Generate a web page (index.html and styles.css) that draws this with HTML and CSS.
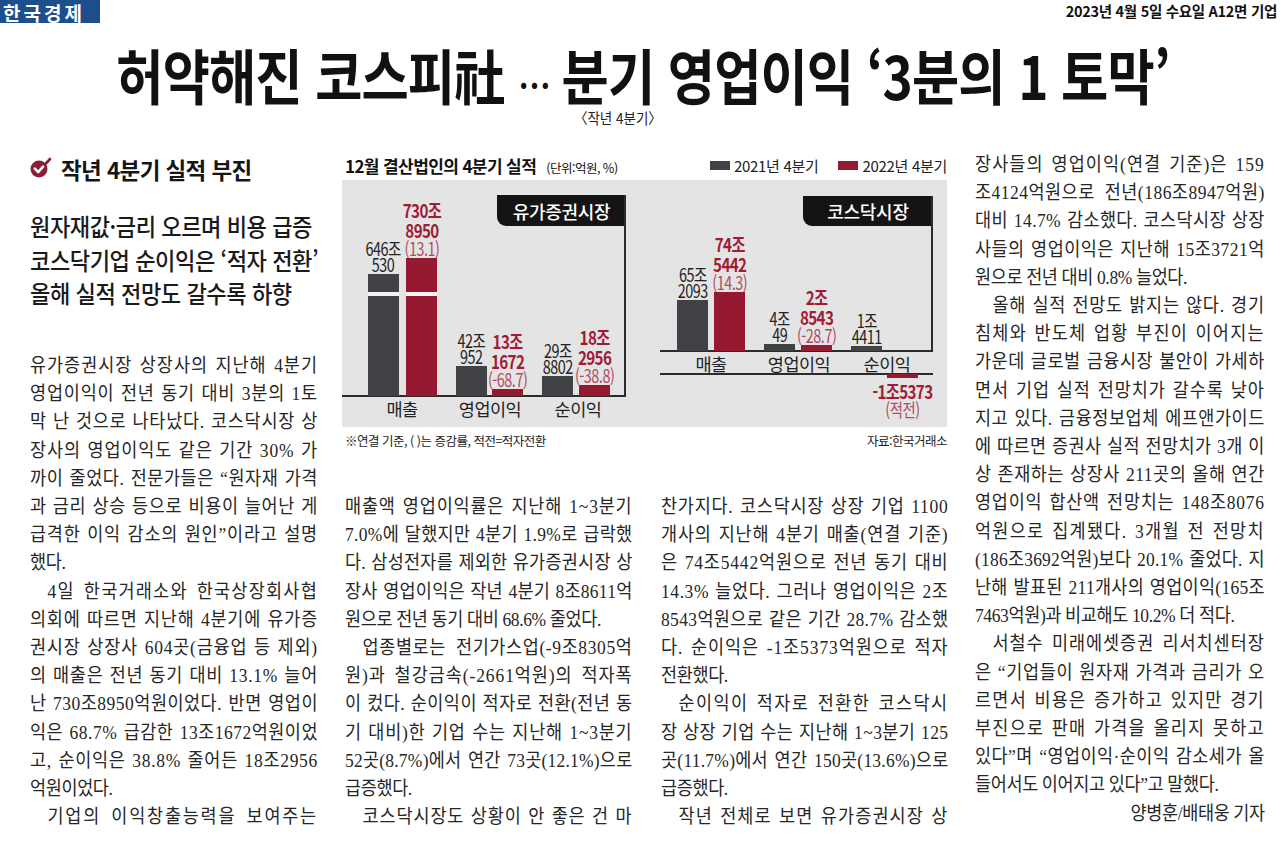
FILE: index.html
```html
<!DOCTYPE html>
<html lang="ko">
<head>
<meta charset="utf-8">
<title>허약해진 코스피社</title>
<link rel="stylesheet" href="styles.css">
</head>
<body>
<div class="topbar">
  <div class="logo">한국경제</div>
  <div class="dateline">2023년 4월 5일 수요일 A12면 기업</div>
</div>
<div class="headline"><h1>허약해진 코스피社 <span class="ell">⋯</span> 분기 영업이익 ‘3분의 1 토막’</h1></div>
<div class="subtitle"><span>〈작년 4분기〉</span></div>

<div class="main">
  <div class="col left">
    <div class="sec-head">
      <svg class="chk" width="24" height="22" viewBox="0 0 24 22"><circle cx="9" cy="12" r="8.5" fill="#8c1d35"/><polyline points="4.8,11.6 8.3,15 13.2,9.4" fill="none" stroke="#fff" stroke-width="2.6" stroke-linecap="round" stroke-linejoin="round"/><line x1="14.6" y1="7.8" x2="20" y2="2" stroke="#8c1d35" stroke-width="2.6" stroke-linecap="round"/></svg>
      <span>작년 4분기 실적 부진</span>
    </div>
    <div class="lead">
      <span>원자재값·금리 오르며 비용 급증</span>
      <span>코스닥기업 순이익은 ‘적자 전환’</span>
      <span>올해 실적 전망도 갈수록 하향</span>
    </div>
    <div class="txt first">
      <p>
        <span>유가증권시장 상장사의 지난해 4분기</span>
        <span>영업이익이 전년 동기 대비 3분의 1토</span>
        <span>막 난 것으로 나타났다. 코스닥시장 상</span>
        <span>장사의 영업이익도 같은 기간 30% 가</span>
        <span>까이 줄었다. 전문가들은 “원자재 가격</span>
        <span>과 금리 상승 등으로 비용이 늘어난 게</span>
        <span>급격한 이익 감소의 원인”이라고 설명</span>
        <span class="e">했다.</span>
      </p>
      <p>
        <span class="i">4일 한국거래소와 한국상장회사협</span>
        <span>의회에 따르면 지난해 4분기에 유가증</span>
        <span>권시장 상장사 604곳(금융업 등 제외)</span>
        <span>의 매출은 전년 동기 대비 13.1% 늘어</span>
        <span>난 730조8950억원이었다. 반면 영업이</span>
        <span>익은 68.7% 급감한 13조1672억원이었</span>
        <span>고, 순이익은 38.8% 줄어든 18조2956</span>
        <span class="e">억원이었다.</span>
      </p>
      <p>
        <span class="i">기업의 이익창출능력을 보여주는</span>
      </p>
    </div>
  </div>

  <div class="col mid">
    <div class="chart">
      <div class="chart-head">
        <div class="ctitle">12월 결산법인의 4분기 실적<small>(단위:억원, %)</small></div>
        <div class="legend">
          <span class="key"><i class="sw dk"></i>2021년 4분기</span>
          <span class="key"><i class="sw rd"></i>2022년 4분기</span>
        </div>
      </div>
      <div class="panel">
        <div class="tag t-a">유가증권시장</div>
        <div class="ln l-v1"></div>
        <div class="ln l-b1"></div>

        <div class="bc" style="left:26px;bottom:31px"><div class="v">646조<br>530</div><div class="bar dk brk" style="height:122px"></div></div>
        <div class="bc" style="left:64px;bottom:31px"><div class="v r"><b>730조<br>8950</b><span class="p">(13.1)</span></div><div class="bar rd brk" style="height:138px"></div></div>
        <div class="bc" style="left:114px;bottom:31px"><div class="v">42조<br>952</div><div class="bar dk" style="height:30px"></div></div>
        <div class="bc" style="left:150px;bottom:31px"><div class="v r"><b>13조<br>1672</b><span class="p">(-68.7)</span></div><div class="bar rd" style="height:7px"></div></div>
        <div class="bc" style="left:200px;bottom:31px"><div class="v">29조<br>8802</div><div class="bar dk" style="height:20px"></div></div>
        <div class="bc" style="left:237px;bottom:31px"><div class="v r"><b>18조<br>2956</b><span class="p">(-38.8)</span></div><div class="bar rd" style="height:11px"></div></div>
        <div class="cats c1"><span>매출</span><span>영업이익</span><span>순이익</span></div>

        <div class="tag t-b">코스닥시장</div>
        <div class="ln l-v2"></div>
        <div class="ln l-b2"></div>
        <div class="ln l-b3"></div>

        <div class="bc" style="left:335px;bottom:76px"><div class="v">65조<br>2093</div><div class="bar dk" style="height:51px"></div></div>
        <div class="bc" style="left:372px;bottom:76px"><div class="v r"><b>74조<br>5442</b><span class="p">(14.3)</span></div><div class="bar rd" style="height:59px"></div></div>
        <div class="bc" style="left:422px;bottom:76px"><div class="v">4조<br>49</div><div class="bar dk" style="height:7px"></div></div>
        <div class="bc" style="left:459px;bottom:76px"><div class="v r"><b>2조<br>8543</b><span class="p">(-28.7)</span></div><div class="bar rd" style="height:6px"></div></div>
        <div class="bc" style="left:509px;bottom:76px"><div class="v">1조<br>4411</div><div class="bar dk" style="height:5px"></div></div>
        <div class="neg" style="left:545px;top:194px"><div class="bar rd" style="height:4px"></div><div class="v r"><b>-1조5373</b><span class="p">(적전)</span></div></div>
        <div class="cats c2"><span>매출</span><span>영업이익</span><span>순이익</span></div>
      </div>
      <div class="chart-foot"><span>※연결 기준, ( )는 증감률, 적전=적자전환</span><span>자료:한국거래소</span></div>
    </div>

    <div class="twocol">
      <div class="txt">
        <p>
          <span>매출액 영업이익률은 지난해 1~3분기</span>
          <span>7.0%에 달했지만 4분기 1.9%로 급락했</span>
          <span>다. 삼성전자를 제외한 유가증권시장 상</span>
          <span>장사 영업이익은 작년 4분기 8조8611억</span>
          <span class="e">원으로 전년 동기 대비 68.6% 줄었다.</span>
        </p>
        <p>
          <span class="i">업종별로는 전기가스업(-9조8305억</span>
          <span>원)과 철강금속(-2661억원)의 적자폭</span>
          <span>이 컸다. 순이익이 적자로 전환(전년 동</span>
          <span>기 대비)한 기업 수는 지난해 1~3분기</span>
          <span>52곳(8.7%)에서 연간 73곳(12.1%)으로</span>
          <span class="e">급증했다.</span>
        </p>
        <p>
          <span class="i">코스닥시장도 상황이 안 좋은 건 마</span>
        </p>
      </div>
      <div class="txt">
        <p>
          <span>찬가지다. 코스닥시장 상장 기업 1100</span>
          <span>개사의 지난해 4분기 매출(연결 기준)</span>
          <span>은 74조5442억원으로 전년 동기 대비</span>
          <span>14.3% 늘었다. 그러나 영업이익은 2조</span>
          <span>8543억원으로 같은 기간 28.7% 감소했</span>
          <span>다. 순이익은 -1조5373억원으로 적자</span>
          <span class="e">전환했다.</span>
        </p>
        <p>
          <span class="i">순이익이 적자로 전환한 코스닥시</span>
          <span>장 상장 기업 수는 지난해 1~3분기 125</span>
          <span>곳(11.7%)에서 연간 150곳(13.6%)으로</span>
          <span class="e">급증했다.</span>
        </p>
        <p>
          <span class="i">작년 전체로 보면 유가증권시장 상</span>
        </p>
      </div>
    </div>
  </div>

  <div class="col right">
    <div class="txt wide">
      <p>
        <span>장사들의 영업이익(연결 기준)은 159</span>
        <span>조4124억원으로 전년(186조8947억원)</span>
        <span>대비 14.7% 감소했다. 코스닥시장 상장</span>
        <span>사들의 영업이익은 지난해 15조3721억</span>
        <span class="e">원으로 전년 대비 0.8% 늘었다.</span>
      </p>
      <p>
        <span class="i">올해 실적 전망도 밝지는 않다. 경기</span>
        <span>침체와 반도체 업황 부진이 이어지는</span>
        <span>가운데 글로벌 금융시장 불안이 가세하</span>
        <span>면서 기업 실적 전망치가 갈수록 낮아</span>
        <span>지고 있다. 금융정보업체 에프앤가이드</span>
        <span>에 따르면 증권사 실적 전망치가 3개 이</span>
        <span>상 존재하는 상장사 211곳의 올해 연간</span>
        <span>영업이익 합산액 전망치는 148조8076</span>
        <span>억원으로 집계됐다. 3개월 전 전망치</span>
        <span>(186조3692억원)보다 20.1% 줄었다. 지</span>
        <span>난해 발표된 211개사의 영업이익(165조</span>
        <span class="e">7463억원)과 비교해도 10.2% 더 적다.</span>
      </p>
      <p>
        <span class="i">서철수 미래에셋증권 리서치센터장</span>
        <span>은 “기업들이 원자재 가격과 금리가 오</span>
        <span>르면서 비용은 증가하고 있지만 경기</span>
        <span>부진으로 판매 가격을 올리지 못하고</span>
        <span>있다”며 “영업이익·순이익 감소세가 올</span>
        <span class="e">들어서도 이어지고 있다”고 말했다.</span>
        <span class="by">양병훈/배태웅 기자</span>
      </p>
    </div>
  </div>
</div>
<script src="script.js"></script>
</body>
</html>
```
FILE: styles.css
```css
* { box-sizing: border-box; margin: 0; padding: 0; }
html, body { background: #fff; }
body {
  width: 1280px;
  height: 853px;
  overflow: hidden;
  font-family: "Noto Sans CJK KR", "Noto Sans", sans-serif;
  color: #222;
}

/* top bar */
.topbar { display: flex; justify-content: space-between; align-items: flex-start; height: 24px; }
.logo {
  width: 100px; height: 23px; padding: 3px 0 0 3px;
  background: #1c4f8c; color: #fff;
  font-size: 19px; font-weight: 700; line-height: 20px; letter-spacing: 3px;
}
.dateline { font-size: 14.5px; font-weight: 700; line-height: 20px; padding: 1px 3px 0 0; letter-spacing: -0.3px; color: #111; }

/* headline */
.headline { display: flex; justify-content: center; margin-top: 20px; height: 60px; padding-left: 6px; }
.headline h1 {
  flex: none; white-space: nowrap;
  font-size: 60px; font-weight: 700; line-height: 60px; letter-spacing: -1px;
  color: #111; transform: scaleX(0.855);
}
.headline .ell { font-size: 38px; letter-spacing: -3px; }
.subtitle { display: flex; justify-content: center; padding-right: 44px; margin-top: 4px; height: 19px; }
.subtitle span { font-size: 15px; line-height: 19px; transform: scaleX(0.9); color: #222; }

/* main grid */
.main {
  display: grid;
  grid-template-columns: 288px 603px 290px;
  column-gap: 27px;
  padding-left: 30px;
  margin-top: 24px;
}

/* left column */
.sec-head {
  display: flex; align-items: center; gap: 7px;
  height: 30px; margin-top: 3px;
  font-size: 22.5px; font-weight: 700; letter-spacing: -0.6px; color: #151515;
}
.chk { flex: none; margin-top: -2px; }
.lead {
  width: 330px; margin-top: 25px;
  transform: scaleX(0.93); transform-origin: 0 0;
  font-size: 23.8px; line-height: 33.5px; font-weight: 500; letter-spacing: -0.5px; color: #1a1a1a;
}
.lead span { display: block; white-space: nowrap; }

/* body text: newspaper lines, justified; tracking fitted per line by script.js */
.txt {
  width: 313px;
  transform: scaleX(0.92); transform-origin: 0 0;
  font-family: "Liberation Serif", "Noto Sans CJK KR", serif;
  font-size: 19px; line-height: 28.2px; letter-spacing: -0.4px; color: #262626;
}
.txt.wide { width: 315px; }
.txt.first { margin-top: 42.5px; }
.txt span { display: block; text-align: justify; text-align-last: justify; white-space: nowrap; }
.txt span.e { text-align-last: left; }
.txt span.i { text-indent: 1em; }
.txt span.by { text-align: right; text-align-last: right; }
.txt span.measure { text-align: left; text-align-last: left; }

/* chart */
.chart { width: 605px; margin-left: -3px; }
.chart-head { display: flex; justify-content: space-between; align-items: center; height: 29px; padding-left: 3px; }
.ctitle { font-size: 17px; font-weight: 700; letter-spacing: -0.6px; color: #111; }
.ctitle small { font-size: 12.5px; font-weight: 400; margin-left: 10px; letter-spacing: -0.5px; }
.legend { display: flex; gap: 20px; font-size: 15px; letter-spacing: -0.3px; }
.key { display: flex; align-items: center; gap: 4px; }
.sw { display: inline-block; width: 20px; height: 9px; }
.sw.dk, .bar.dk { background: #404245; }
.sw.rd, .bar.rd { background: #951a31; }

.panel { position: relative; height: 247px; background: #e4e4e4; }
.tag {
  position: absolute; display: flex; align-items: center; justify-content: center;
  background: #141414; color: #fff; font-size: 18px; font-weight: 500; letter-spacing: -0.3px;
  border-bottom-left-radius: 9px;
}
.t-a { left: 155px; top: 15px; width: 129px; height: 31px; }
.t-b { left: 461px; top: 16px; width: 130px; height: 30px; }
.ln { position: absolute; background: #2b2b2b; }
.l-v1 { left: 282px; top: 15px; width: 2px; height: 202px; }
.l-b1 { left: 0; top: 215px; width: 284px; height: 2px; }
.l-v2 { left: 589px; top: 16px; width: 2px; height: 156px; }
.l-b2 { left: 318px; top: 170px; width: 273px; height: 2px; }
.l-b3 { left: 318px; top: 193px; width: 273px; height: 2px; }

.bc, .neg { position: absolute; width: 31px; display: flex; flex-direction: column; align-items: center; }
.bar { position: relative; width: 31px; flex: none; }
.bar.brk::after { content: ""; position: absolute; left: 0; right: 0; bottom: 100px; height: 4px; background: #f3f3f3; }
.v {
  white-space: nowrap; text-align: center; margin-bottom: 2px;
  font-size: 18px; line-height: 16px; letter-spacing: -0.6px; color: #222;
  transform: scaleX(0.8);
}
.v.r { color: #a01c36; }
.v.r b { display: block; font-size: 19px; line-height: 20px; letter-spacing: -0.8px; }
.v.r .p { display: block; color: #b04a5e; }
.neg .v { margin-bottom: 0; margin-top: 3px; }

.cats { position: absolute; display: flex; font-size: 17.5px; line-height: 22px; letter-spacing: -0.5px; color: #222; }
.cats span { width: 88px; text-align: center; }
.c1 { left: 16px; top: 218px; }
.c2 { left: 325px; top: 173px; }

.chart-foot {
  display: flex; justify-content: space-between; align-items: center;
  height: 26px; padding-left: 3px;
  font-size: 12.5px; letter-spacing: -0.5px; color: #222;
}

.twocol { display: grid; grid-template-columns: 287.5px 287.5px; column-gap: 28px; margin-top: 40px; }
.twocol .txt { width: 312.5px; }
```
FILE: script.js
```js
// Newspaper-style justification: spread most of each line's slack
// between the characters (as Korean typesetting does), the rest at spaces.
(function () {
  var SCALE = 0.92;     // matches transform: scaleX(.92) on .txt
  var LETTER_SHARE = 0.8;

  function fitLines() {
    var lines = document.querySelectorAll('.txt span');
    Array.prototype.forEach.call(lines, function (line) {
      if (line.classList.contains('e') || line.classList.contains('by')) return;
      line.style.letterSpacing = '';
      line.classList.add('measure');
      var range = document.createRange();
      range.selectNodeContents(line);
      var textRect = range.getBoundingClientRect();
      var boxRect = line.getBoundingClientRect();
      line.classList.remove('measure');
      var extra = (boxRect.right - textRect.right) / SCALE;
      var n = line.textContent.length;
      if (extra <= 0 || n < 2) return;
      var base = parseFloat(getComputedStyle(line).letterSpacing) || 0;
      line.style.letterSpacing = (base + extra * LETTER_SHARE / n).toFixed(2) + 'px';
    });
  }

  fitLines();
  if (document.fonts && document.fonts.ready) {
    document.fonts.ready.then(fitLines);
  }
})();
```
